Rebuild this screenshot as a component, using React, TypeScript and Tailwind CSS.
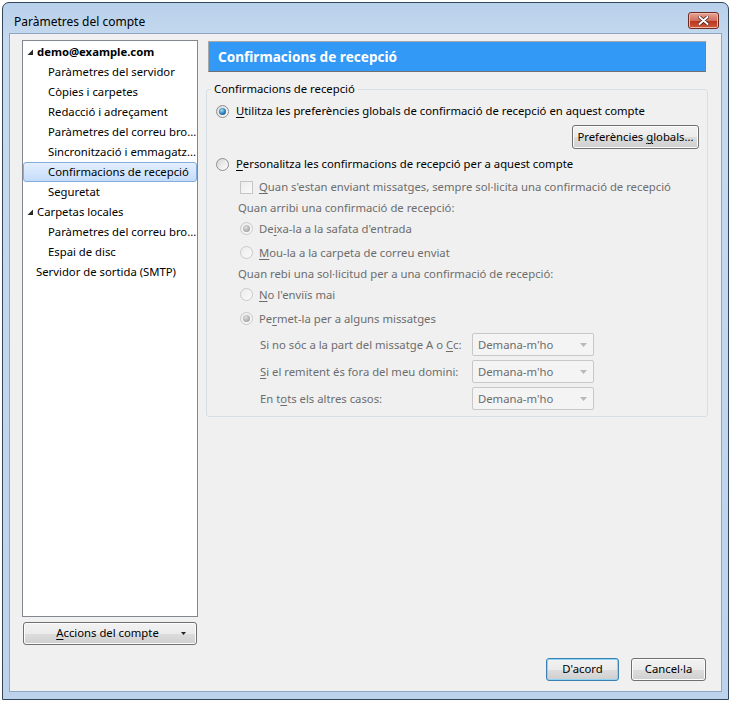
import React from "react";

const font = "font-['Noto_Sans',sans-serif]";

function Radio({ checked, disabled }: { checked?: boolean; disabled?: boolean }) {
  return (
    <span
      className={`inline-flex w-[13px] h-[13px] shrink-0 items-center justify-center rounded-full border ${
        disabled
          ? "border-[#c9c9c9] bg-[linear-gradient(135deg,#ececec,#fafafa)]"
          : "border-[#8e8f8f] bg-[linear-gradient(135deg,#d6d6d6,#ffffff)]"
      }`}
    >
      {checked && (
        <span
          className={`w-[7px] h-[7px] rounded-full ${
            disabled
              ? "bg-[radial-gradient(circle_at_40%_35%,#e0e0e0,#a6a6a6_70%,#8c8c8c)]"
              : "bg-[radial-gradient(circle_at_40%_35%,#a4e0fa,#2c78b4_55%,#174c7c)]"
          }`}
        />
      )}
    </span>
  );
}

function Tri() {
  return (
    <svg width="7" height="7" viewBox="0 0 7 7" className="shrink-0">
      <polygon points="6,0.5 6,6 0.5,6" fill="#262626" />
    </svg>
  );
}

function TreeRow({ children, indent, selected, bold, tri }: { children: React.ReactNode; indent: number; selected?: boolean; bold?: boolean; tri?: boolean }) {
  return (
    <div
      className={`h-[20px] flex items-center whitespace-nowrap overflow-hidden rounded-[3px] border ${
        selected ? "border-[#84acdd] bg-[linear-gradient(#e4effd,#c4dcfb)]" : "border-transparent"
      } ${indent === 2 ? "pl-[24px]" : indent === 1 ? "pl-[3px]" : "pl-[12px]"} ${bold ? "font-bold" : ""}`}
    >
      {tri && (
        <span className="w-[8px] flex items-center">
          <Tri />
        </span>
      )}
      {children}
    </div>
  );
}

function Btn({ children, w, def }: { children: React.ReactNode; w: string; def?: boolean }) {
  return (
    <div
      className={`${w} h-[23px] rounded-[3px] border ${
        def ? "border-[#3c7fb1] shadow-[inset_0_0_0_1px_#8fd3f5]" : "border-[#707070] shadow-[inset_0_0_0_1px_#fcfcfc]"
      } bg-[linear-gradient(#f2f2f2_0%,#ebebeb_50%,#dddddd_51%,#cfcfcf_100%)] flex items-center justify-center text-[11.3px] text-black whitespace-nowrap`}
    >
      {children}
    </div>
  );
}

function Select() {
  return (
    <div className="w-[122px] h-[23px] rounded-[2px] border border-[#c8c8c8] bg-[#f4f4f4] flex items-center justify-between pl-[5px] pr-[6px] text-[#6d6d6d]">
      <span>Demana-m'ho</span>
      <svg width="7" height="4" viewBox="0 0 7 4">
        <polygon points="0,0 7,0 3.5,4" fill="#b9b9b9" />
      </svg>
    </div>
  );
}

export default function App() {
  return (
    <div className={`w-[731px] h-[702px] bg-white overflow-hidden ${font} text-[11.3px] text-black`}>
      <div className="ml-[2px] mt-[2px] w-[727px] h-[698px] rounded-t-[7px] border border-[#33465c] bg-[linear-gradient(#b8d0ea,#c6daef_40px,#bdd3ec)] flex flex-col">
        {/* title bar */}
        <div className="h-[30px] flex items-start justify-between pl-[11px] pr-[9px]">
          <div className="mt-[11px] text-[12px] leading-[16px] text-black">Paràmetres del compte</div>
          <div className="mt-[9px] w-[31px] h-[17px] rounded-[3px] border border-[#6e2a22] bg-[linear-gradient(#e8a496,#d0705e_50%,#b8331d_51%,#cf5a3b)] flex items-center justify-center shadow-[inset_0_0_0_1px_#f0b8aa]">
            <svg width="11" height="9" viewBox="0 0 11 9">
              <path d="M1.5 1 L9.5 8 M9.5 1 L1.5 8" stroke="#4a1a12" strokeWidth="3.4" strokeLinecap="round" />
              <path d="M1.5 1 L9.5 8 M9.5 1 L1.5 8" stroke="#ffffff" strokeWidth="2" strokeLinecap="round" />
            </svg>
          </div>
        </div>
        {/* content */}
        <div className="mx-[6px] mb-[7px] flex-1 border border-[#8ea6c2] bg-[#f0f0f0] flex pt-[6px] pl-[12px] pr-[13px]">
          {/* left */}
          <div className="w-[176px] flex flex-col">
            <div className="h-[577px] border border-[#828790] bg-white leading-[16px]">
              <div className="pt-[1px]">
                <TreeRow indent={1} bold tri>
                  <span className="ml-[2px]">demo@example.com</span>
                </TreeRow>
                <TreeRow indent={2}>Paràmetres del servidor</TreeRow>
                <TreeRow indent={2}>Còpies i carpetes</TreeRow>
                <TreeRow indent={2}>Redacció i adreçament</TreeRow>
                <TreeRow indent={2}>Paràmetres del correu bro...</TreeRow>
                <TreeRow indent={2}>Sincronització i emmagatz...</TreeRow>
                <TreeRow indent={2} selected>Confirmacions de recepció</TreeRow>
                <TreeRow indent={2}>Seguretat</TreeRow>
                <TreeRow indent={1} tri>
                  <span className="ml-[2px]">Carpetas locales</span>
                </TreeRow>
                <TreeRow indent={2}>Paràmetres del correu bro...</TreeRow>
                <TreeRow indent={2}>Espai de disc</TreeRow>
                <TreeRow indent={0}>Servidor de sortida (SMTP)</TreeRow>
              </div>
            </div>
            <div className="mt-[5px] ml-[1px]">
              <Btn w="w-[174px]">
                <span className="flex-1 text-center pl-[10px]">
                  <u className="underline-offset-2">A</u>ccions del compte
                </span>
                <svg width="5" height="3" viewBox="0 0 5 3" className="mr-[10px]">
                  <polygon points="0,0 5,0 2.5,3" fill="#222" />
                </svg>
              </Btn>
            </div>
          </div>
          {/* right */}
          <div className="ml-[8px] flex-1 flex flex-col">
            <div className="mt-[1px] ml-[2px] mr-[2px] h-[31px] border border-[#a8a8a8] border-b-[#707070] border-r-[#808080] bg-[#3399f7] flex items-center pl-[9px] pt-[1px] text-white font-bold text-[13.6px]">
              Confirmacions de recepció
            </div>
            <fieldset className="mt-[9px] border border-[#d5dfe5] rounded-[3px] px-0 pb-[6px] pt-0 m-0">
              <legend className="ml-[4px] px-[3px] leading-[16px]">Confirmacions de recepció</legend>
              <div className="flex flex-col leading-[16px] whitespace-nowrap">
                <div className="mt-[4px] h-[20px] flex items-center pl-[9px]">
                  <Radio checked />
                  <span className="ml-[7px]">
                    <u className="underline-offset-2">U</u>tilitza les preferències globals de confirmació de recepció en aquest compte
                  </span>
                </div>
                <div className="mt-[4px] flex justify-end pr-[8px]">
                  <Btn w="w-[127px] h-[24px]">
                    Preferències <u className="underline-offset-2 ml-[3px]">g</u>lobals...
                  </Btn>
                </div>
                <div className="mt-[5px] h-[20px] flex items-center pl-[9px]">
                  <Radio />
                  <span className="ml-[7px]">
                    <u className="underline-offset-2">P</u>ersonalitza les confirmacions de recepció per a aquest compte
                  </span>
                </div>
                <div className="text-[#6d6d6d] flex flex-col">
                  <div className="mt-[3px] h-[20px] flex items-center pl-[33px]">
                    <span className="w-[13px] h-[13px] border border-[#c5c5c5] bg-[linear-gradient(135deg,#ececec,#fafafa)] shrink-0" />
                    <span className="ml-[6px]">
                      <u className="underline-offset-2">Q</u>uan s'estan enviant missatges, sempre sol·licita una confirmació de recepció
                    </span>
                  </div>
                  <div className="h-[21px] flex items-center pl-[31px]">Quan arribi una confirmació de recepció:</div>
                  <div className="h-[21px] flex items-center pl-[33px]">
                    <Radio checked disabled />
                    <span className="ml-[6px]">
                      De<u className="underline-offset-2">i</u>xa-la a la safata d'entrada
                    </span>
                  </div>
                  <div className="mt-[3px] h-[21px] flex items-center pl-[33px]">
                    <Radio disabled />
                    <span className="ml-[6px]">
                      <u className="underline-offset-2">M</u>ou-la a la carpeta de correu enviat
                    </span>
                  </div>
                  <div className="h-[21px] flex items-center pl-[31px]">Quan rebi una sol·licitud per a una confirmació de recepció:</div>
                  <div className="h-[21px] flex items-center pl-[33px]">
                    <Radio disabled />
                    <span className="ml-[6px]">
                      <u className="underline-offset-2">N</u>o l'enviïs mai
                    </span>
                  </div>
                  <div className="mt-[3px] h-[21px] flex items-center pl-[33px]">
                    <Radio checked disabled />
                    <span className="ml-[6px]">
                      Pe<u className="underline-offset-2">r</u>met-la per a alguns missatges
                    </span>
                  </div>
                  <div className="mt-[4px] flex items-center pl-[53px]">
                    <span className="w-[212px]">
                      Si no sóc a la part del missatge A o <u className="underline-offset-2">C</u>c:
                    </span>
                    <Select />
                  </div>
                  <div className="mt-[4px] flex items-center pl-[53px]">
                    <span className="w-[212px]">
                      <u className="underline-offset-2">S</u>i el remitent és fora del meu domini:
                    </span>
                    <Select />
                  </div>
                  <div className="mt-[4px] flex items-center pl-[53px]">
                    <span className="w-[212px]">
                      En t<u className="underline-offset-2">o</u>ts els altres casos:
                    </span>
                    <Select />
                  </div>
                </div>
              </div>
            </fieldset>
            <div className="flex-1" />
            <div className="flex justify-end gap-[12px] mb-[10px] mr-[2px]">
              <Btn w="w-[73px]" def>
                D'acord
              </Btn>
              <Btn w="w-[75px]">Cancel·la</Btn>
            </div>
          </div>
        </div>
      </div>
    </div>
  );
}
